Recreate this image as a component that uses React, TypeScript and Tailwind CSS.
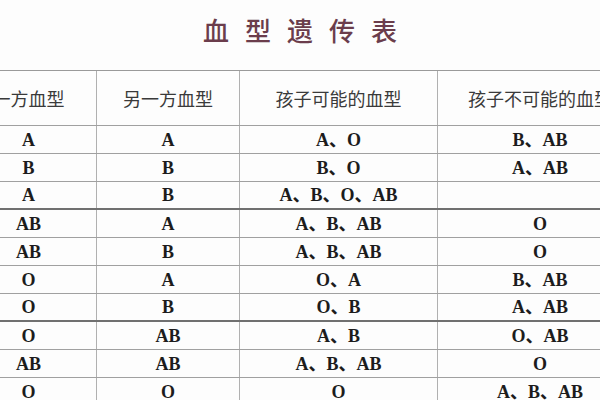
const header = ["一方血型", "另一方血型", "孩子可能的血型", "孩子不可能的血型"];

const rows: { cells: string[]; thick?: boolean }[] = [
  { cells: ["A", "A", "A、O", "B、AB"] },
  { cells: ["B", "B", "B、O", "A、AB"] },
  { cells: ["A", "B", "A、B、O、AB", ""], thick: true },
  { cells: ["AB", "A", "A、B、AB", "O"] },
  { cells: ["AB", "B", "A、B、AB", "O"] },
  { cells: ["O", "A", "O、A", "B、AB"] },
  { cells: ["O", "B", "O、B", "A、AB"], thick: true },
  { cells: ["O", "AB", "A、B", "O、AB"] },
  { cells: ["AB", "AB", "A、B、AB", "O"] },
  { cells: ["O", "O", "O", "A、B、AB"] },
];

const cols = "grid grid-cols-[136px_143px_198px_204px]";

export default function App() {
  return (
    <div className="w-[600px] h-[400px] overflow-hidden bg-[#fdfdfd]">
      <div className="h-[70px] flex items-center justify-center pb-[10px]">
        <h1
          className="text-[26px] leading-none tracking-[16px] pl-[16px] text-[#6b3d4c] font-medium"
          style={{ fontFamily: '"Noto Sans CJK SC", sans-serif' }}
        >
          血型遗传表
        </h1>
      </div>
      <div className="ml-[-39px] w-[681px] border-t border-[#9a9a9a]">
        <div
          className={`${cols} h-[55px] border-b border-[#a0a0a0] text-[18px] text-[#3a3a3a]`}
          style={{ fontFamily: '"Noto Sans CJK SC", sans-serif' }}
        >
          {header.map((h, i) => (
            <div
              key={i}
              className={`flex items-center justify-center whitespace-nowrap ${i < 3 ? "border-r border-[#b0b0b0]" : ""}`}
            >
              {h}
            </div>
          ))}
        </div>
        {rows.map((r, ri) => (
          <div
            key={ri}
            className={`${cols} h-[28px] text-[18px] font-bold text-[#1c1c1c] ${r.thick ? "border-b-2 border-[#707070]" : "border-b border-[#a0a0a0]"}`}
            style={{ fontFamily: '"Liberation Serif", "Noto Sans CJK SC", serif' }}
          >
            {r.cells.map((c, ci) => (
              <div
                key={ci}
                className={`flex items-center justify-center whitespace-nowrap leading-none ${ci < 3 ? "border-r border-[#b0b0b0]" : ""}`}
              >
                {c}
              </div>
            ))}
          </div>
        ))}
      </div>
    </div>
  );
}
